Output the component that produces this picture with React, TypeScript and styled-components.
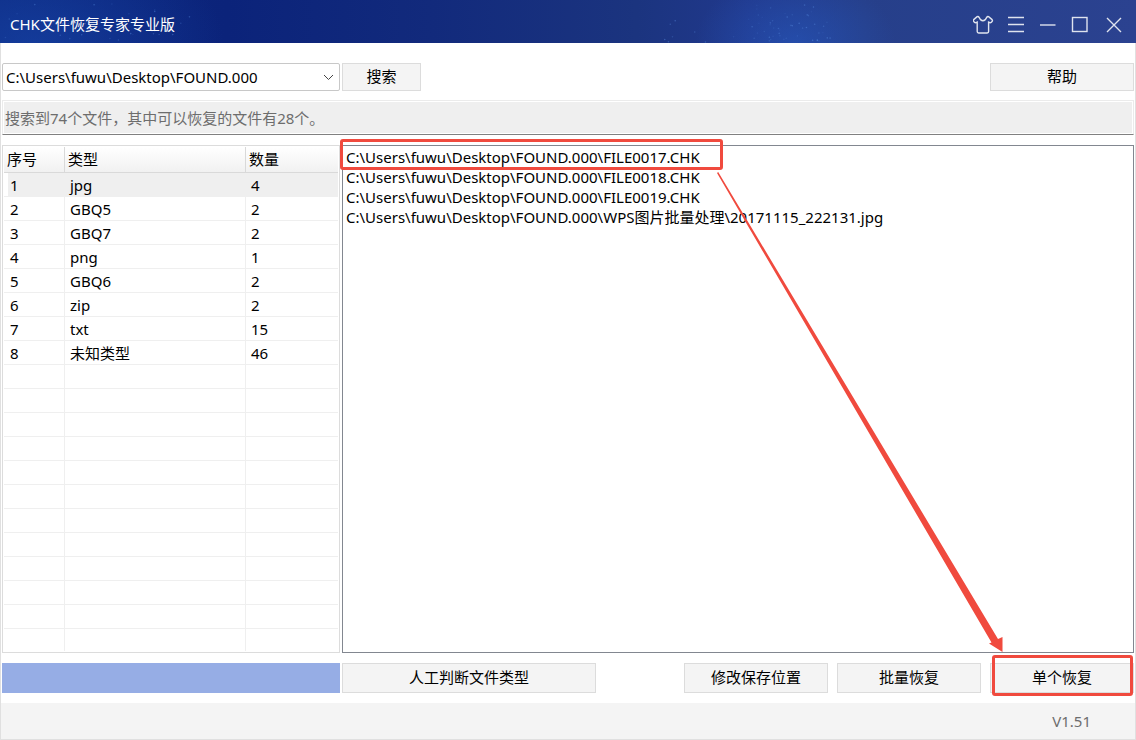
import React from 'react';
import styled, { createGlobalStyle } from 'styled-components';

const red = '#f04a3e';
const line = '#dcdcdc';

const GlobalStyle = createGlobalStyle`
  *, *::before, *::after { box-sizing: border-box; }
  body { margin: 0; background: #fff; }
  body, button, select {
    font-family: "Noto Sans", "Noto Sans CJK SC", sans-serif;
    font-size: 15px;
    line-height: 20px;
    color: #000;
  }
`;

const Window = styled.div`
  display: flex;
  flex-direction: column;
  min-height: 100vh;
`;

const TitleBar = styled.header`
  position: relative;
  display: flex;
  align-items: center;
  justify-content: space-between;
  height: 43px;
  padding: 5px 13px 0 10px;
  color: #fff;
  background:
    radial-gradient(ellipse 100px 70px at 70% 100%, rgba(38, 88, 190, 0.6), transparent),
    radial-gradient(ellipse 190px 110px at 3% 100%, rgba(26, 76, 180, 0.5), transparent),
    linear-gradient(90deg, #0d2a80 0%, #0b237a 20%, #122a7c 38%, #1b347f 56%, #21398d 66%, #263f8a 76%, #2b4290 100%);
`;

const Stars = styled.svg`
  position: absolute;
  inset: 0;
  width: 100%;
  height: 100%;
`;

const Title = styled.h1`
  position: relative;
  margin: 0;
  font-size: 15px;
  font-weight: 400;
`;

const Controls = styled.div`
  position: relative;
  display: flex;
  gap: 10px;
`;

const IconButton = styled.button`
  display: flex;
  padding: 0;
  border: 0;
  background: none;
  svg { width: 22px; height: 22px; fill: none; stroke: #dfe3ee; stroke-width: 1.4; }
`;

const Body = styled.main`
  display: flex;
  flex: 1;
  flex-direction: column;
  padding: 20px 1px 10px;
  border: solid #e0e0e0;
  border-width: 0 1px;
`;

const SearchRow = styled.div`
  display: flex;
  gap: 2px;
  height: 28px;
`;

const Combo = styled.label`
  position: relative;
  width: 338px;
  svg {
    position: absolute;
    top: 10px;
    right: 6px;
    width: 11px;
    height: 8px;
    fill: none;
    stroke: #444;
    pointer-events: none;
  }
`;

const ComboSelect = styled.select`
  appearance: none;
  width: 100%;
  height: 100%;
  padding: 0 24px 0 3px;
  border: 1px solid #c8c8c8;
  border-radius: 2px;
  background: #fff;
`;

const Button = styled.button<{ $width: number; $end?: boolean }>`
  position: relative;
  width: ${(p) => p.$width}px;
  padding: 0 0 2px;
  margin-left: ${(p) => (p.$end ? 'auto' : '0')};
  border: 1px solid ${line};
  background: #f4f4f4;
`;

const Status = styled.p`
  height: 35px;
  margin: 9px 0 10px;
  padding: 7px 0 0 2px;
  border: 1px solid #ebebeb;
  border-bottom-color: #808080;
  box-shadow: inset 0 0 0 1px #fff;
  background: #efefef;
  color: #6d6d6d;
`;

const Panels = styled.div`
  display: flex;
  flex: 1;
  gap: 2px;
`;

const TablePanel = styled.section`
  width: 338px;
  padding: 1px;
  border: 1px solid ${line};
`;

const Table = styled.table`
  width: 100%;
  table-layout: fixed;
  border-collapse: separate;
  border-spacing: 0;
  th, td {
    height: 24px;
    padding: 0 0 0 5px;
    text-align: left;
    font-weight: 400;
    border-right: 1px solid #efefef;
    border-bottom: 1px solid #efefef;
  }
  th {
    height: 26px;
    padding: 0 0 2px 3px;
    border-color: #d9d9d9;
    background: linear-gradient(#fff, #f1f1f1);
  }
  td:first-child { padding-left: 6px; }
  th:last-child, td:last-child { border-right: 0; }
  tbody tr:last-child td { height: 22px; border-bottom: 0; }
`;

const Row = styled.tr<{ $selected?: boolean }>`
  background: ${(p) => (p.$selected ? 'linear-gradient(90deg, #fff 4px, #efefef 4px)' : 'none')};
`;

const FilePanel = styled.section`
  position: relative;
  flex: 1;
  border: 1px solid #828790;
`;

const FileList = styled.ul`
  margin: 0;
  padding: 1px 3px;
  list-style: none;
`;

const FileItem = styled.li`
  height: 20px;
  white-space: nowrap;
`;

const FileMark = styled.div`
  position: absolute;
  top: -7px;
  left: -3px;
  width: 383px;
  height: 31px;
  border: 3px solid ${red};
  border-radius: 3px;
`;

const Arrow = styled.svg`
  position: absolute;
  top: 26px;
  left: 374px;
  width: calc(100% - 504px);
  height: calc(100% - 26px);
  fill: ${red};
`;

const ActionRow = styled.div`
  display: flex;
  gap: 9px;
  height: 30px;
  margin-top: 10px;
`;

const ProgressGroup = styled.div`
  display: flex;
  gap: 2px;
`;

const Progress = styled.div`
  width: 338px;
  background: #96ade5;
`;

const ButtonMark = styled.span`
  position: absolute;
  inset: -9px 0 -4px 1px;
  border: 3px solid ${red};
  border-radius: 3px;
`;

const Footer = styled.footer`
  display: flex;
  align-items: center;
  justify-content: flex-end;
  height: 37px;
  padding-right: 44px;
  border: 1px solid #e0e0e0;
  border-top: 0;
  background: #f4f4f4;
  color: #6d6d6d;
`;

const types: [string, number][] = [
  ['jpg', 4], ['GBQ5', 2], ['GBQ7', 2], ['png', 1],
  ['GBQ6', 2], ['zip', 2], ['txt', 15], ['未知类型', 46],
];

const files = [
  'FILE0017.CHK',
  'FILE0018.CHK',
  'FILE0019.CHK',
  'WPS图片批量处理\\20171115_222131.jpg',
];

const folder = 'C:\\Users\\fuwu\\Desktop\\FOUND.000';

/* Specks scattered round a centre given in percent of the bar's width. */
const specks = (centre: number, spread: number, count: number) =>
  Array.from({ length: count }, (_, i) => {
    const a = Math.abs(Math.sin(i * 12.9898 + centre) * 43758.5453) % 1;
    const b = Math.abs(Math.sin(i * 78.233 + centre) * 24634.6345) % 1;
    return { x: centre + (a - 0.5) * spread, y: 42 * Math.sqrt(b), o: 0.1 + ((i * 17) % 7) / 20 };
  });

const stars = [...specks(8, 18, 40), ...specks(70, 8, 36), ...specks(66, 16, 24)];

export default function App() {
  return (
    <Window>
      <GlobalStyle />
      <TitleBar>
        <Stars aria-hidden="true">
          {stars.map((s, i) => (
            <circle key={i} cx={`${s.x}%`} cy={s.y} r="0.8" fill="#5f94e8" opacity={s.o} />
          ))}
        </Stars>
        <Title>CHK文件恢复专家专业版</Title>
        <Controls>
          <IconButton aria-label="换肤">
            <svg viewBox="0 0 22 22"><path d="M4.2 3.6L.7 6.6Q0 7.4.7 8.4Q1.8 10.4 4.2 9.2V18.6Q4.2 20 5.6 20H14.2Q15.6 20 15.6 18.6V9.2Q18 10.4 19.1 8.4Q19.8 7.4 19.1 6.6L15.6 3.6Q14.3 3.2 13.6 4.6Q12.4 7.8 9.9 7.8Q7.4 7.8 6.2 4.6Q5.5 3.2 4.2 3.6Z" /></svg>
          </IconButton>
          <IconButton aria-label="菜单">
            <svg viewBox="0 0 22 22"><path d="M3 4.5H19M3 11.5H19M3 18.5H19" /></svg>
          </IconButton>
          <IconButton aria-label="最小化">
            <svg viewBox="0 0 22 22"><path d="M3 12H18.5" /></svg>
          </IconButton>
          <IconButton aria-label="最大化">
            <svg viewBox="0 0 22 22"><rect x="3.5" y="4.5" width="14.5" height="14" /></svg>
          </IconButton>
          <IconButton aria-label="关闭">
            <svg viewBox="0 0 22 22"><path d="M6 5L20 19M20 5L6 19" /></svg>
          </IconButton>
        </Controls>
      </TitleBar>
      <Body>
        <SearchRow>
          <Combo>
            <ComboSelect aria-label="文件夹">
              <option>{folder}</option>
            </ComboSelect>
            <svg viewBox="0 0 11 8"><path d="M1 2L5.5 6.5L10 2" /></svg>
          </Combo>
          <Button $width={79}>搜索</Button>
          <Button $width={144} $end>帮助</Button>
        </SearchRow>
        <Status>搜索到74个文件，其中可以恢复的文件有28个。</Status>
        <Panels>
          <TablePanel>
            <Table>
              <colgroup>
                <col style={{ width: 61 }} />
                <col style={{ width: 181 }} />
                <col />
              </colgroup>
              <thead>
                <tr><th>序号</th><th>类型</th><th>数量</th></tr>
              </thead>
              <tbody>
                {types.map(([name, count], i) => (
                  <Row key={name} $selected={i === 0}>
                    <td>{i + 1}</td><td>{name}</td><td>{count}</td>
                  </Row>
                ))}
                {Array.from({ length: 12 }, (_, i) => (
                  <Row key={i}><td /><td /><td /></Row>
                ))}
              </tbody>
            </Table>
          </TablePanel>
          <FilePanel>
            <FileList>
              {files.map((f) => <FileItem key={f}>{folder}\{f}</FileItem>)}
            </FileList>
            <FileMark />
            <Arrow viewBox="0 0 286 480" preserveAspectRatio="none" aria-hidden="true">
              <path d="M0 1L1.2 0L281 467L285.5 465V480L272 471.5L274.5 470.5Z" />
            </Arrow>
          </FilePanel>
        </Panels>
        <ActionRow>
          <ProgressGroup>
            <Progress role="progressbar" aria-label="进度" />
            <Button $width={254}>人工判断文件类型</Button>
          </ProgressGroup>
          <Button $width={144} $end>修改保存位置</Button>
          <Button $width={144}>批量恢复</Button>
          <Button $width={144}>单个恢复<ButtonMark /></Button>
        </ActionRow>
      </Body>
      <Footer>V1.51</Footer>
    </Window>
  );
}
